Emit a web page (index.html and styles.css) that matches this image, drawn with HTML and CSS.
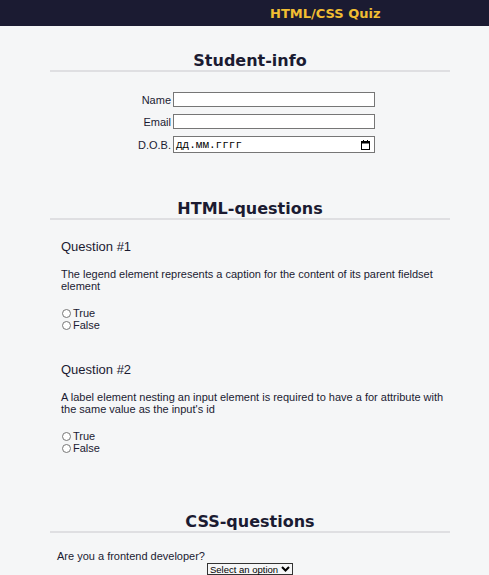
FILE: index.html
```html
<!DOCTYPE html>
<html lang="ru">
<head>
<meta charset="utf-8">
<title>HTML/CSS Quiz</title>
<link rel="stylesheet" href="styles.css">
</head>
<body>
<header class="top">
  <h1 class="brand">HTML/CSS Quiz</h1>
</header>
<main class="quiz">
  <section class="block">
    <h2 class="block-title first">Student-info</h2>
    <div class="info-grid">
      <label class="field-label" for="name">Name</label>
      <input class="text-input" id="name" type="text">
      <label class="field-label" for="email">Email</label>
      <input class="text-input" id="email" type="text">
      <label class="field-label" for="dob">D.O.B.</label>
      <div class="date-box" id="dob">
        <span class="date-text">дд.мм.гггг</span>
        <svg class="cal" width="9" height="10" viewBox="0 0 9 10"><rect x="0.5" y="1.5" width="8" height="8" fill="none" stroke="#000" stroke-width="1"/><rect x="0.5" y="1.5" width="8" height="2" fill="#000"/><rect x="2" y="0" width="1" height="2" fill="#000"/><rect x="6" y="0" width="1" height="2" fill="#000"/></svg>
      </div>
    </div>
  </section>
  <section class="block">
    <h2 class="block-title">HTML-questions</h2>
    <div class="question">
      <h3 class="q-title">Question #1</h3>
      <p class="q-text">The legend element represents a caption for the content of its parent fieldset element</p>
      <div class="options">
        <label class="opt"><input type="radio" name="q1">True</label>
        <label class="opt"><input type="radio" name="q1">False</label>
      </div>
    </div>
    <div class="question">
      <h3 class="q-title">Question #2</h3>
      <p class="q-text">A label element nesting an input element is required to have a for attribute with the same value as the input's id</p>
      <div class="options">
        <label class="opt"><input type="radio" name="q2">True</label>
        <label class="opt"><input type="radio" name="q2">False</label>
      </div>
    </div>
  </section>
  <section class="block">
    <h2 class="block-title">CSS-questions</h2>
    <p class="ask">Are you a frontend developer?</p>
    <div class="select-wrap">
      <div class="select">Select an option
        <svg width="9" height="6" viewBox="0 0 9 6"><path d="M1 1 L4.5 4.5 L8 1" fill="none" stroke="#000" stroke-width="2"/></svg>
      </div>
    </div>
  </section>
</main>
</body>
</html>
```
FILE: styles.css
```css
body {
  margin: 0;
  background: #f5f6f7;
  color: #1b1b32;
  font-family: "Liberation Sans", Arial, sans-serif;
  font-size: 11px;
}
.top {
  height: 26px;
  background: #1b1b32;
  display: flex;
  align-items: center;
  padding-left: 270px;
}
.brand {
  margin: 0;
  font: bold 13px "DejaVu Sans", Verdana, sans-serif;
  color: #f1be32;
}
.quiz {
  width: 400px;
  margin-left: 50px;
}
.block-title {
  margin: 46px 0 0;
  font: bold 16px/19px "DejaVu Sans", Verdana, sans-serif;
  text-align: center;
  border-bottom: 2px solid #dfdfe2;
}
.block-title.first {
  margin-top: 25px;
}
.info-grid {
  display: grid;
  grid-template-columns: 121px 202px;
  column-gap: 2px;
  row-gap: 7px;
  margin-top: 20px;
  align-items: center;
}
.field-label {
  text-align: right;
  font-size: 11px;
  line-height: 12px;
}
.text-input {
  box-sizing: border-box;
  height: 15px;
  margin: 0;
  padding: 0;
  border: 1px solid #767676;
  background: #fff;
}
.date-box {
  box-sizing: border-box;
  height: 17px;
  display: flex;
  align-items: center;
  justify-content: space-between;
  padding: 0 4px 0 2px;
  border: 1px solid #767676;
  background: #fff;
  color: #000;
  font: 11px "Liberation Mono", monospace;
}
.cal {
  display: block;
}
.question {
  padding-bottom: 12px;
}
.q-title {
  margin: 19px 0 0;
  padding-left: 11px;
  font-size: 13px;
  line-height: 15px;
  font-weight: normal;
}
.q-text {
  margin: 14px 0 0;
  padding: 0 0 0 11px;
  line-height: 12px;
}
.options {
  margin-top: 15px;
  padding-left: 11px;
}
.opt {
  display: flex;
  align-items: center;
  line-height: 12px;
}
.opt input {
  width: 9px;
  height: 9px;
  margin: 0 2px 0 1px;
}
.ask {
  margin: 17px 0 0;
  padding-left: 7px;
  line-height: 12px;
}
.select-wrap {
  display: flex;
  justify-content: center;
  margin-top: 1px;
}
.select {
  box-sizing: border-box;
  height: 12px;
  display: flex;
  align-items: center;
  gap: 3px;
  padding: 0 2px;
  border: 1px solid #333;
  font-size: 9.5px;
  color: #000;
}
```
